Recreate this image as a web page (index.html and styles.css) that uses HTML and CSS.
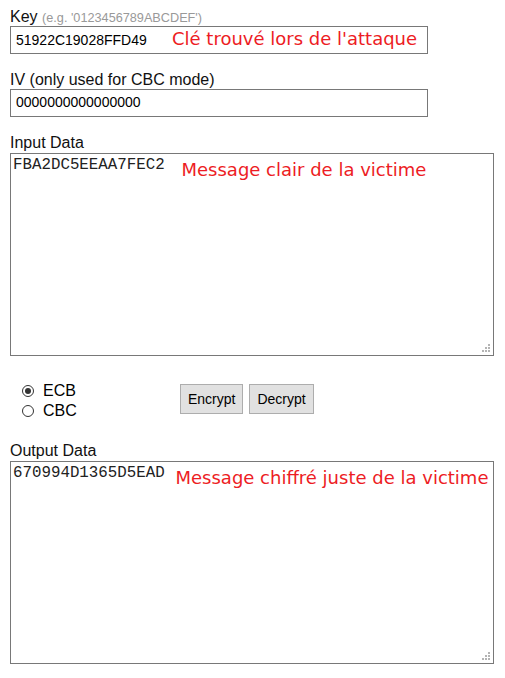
FILE: index.html
```html
<!DOCTYPE html>
<html lang="fr">
<head>
<meta charset="utf-8">
<title>AES</title>
<link rel="stylesheet" href="styles.css">
</head>
<body>
<form class="form">
  <div class="field field--key">
    <div class="label">Key <span class="hint">(e.g. '0123456789ABCDEF')</span></div>
    <div class="box box--line">
      <span class="value value--key">51922C19028FFD49</span>
      <span class="note">Clé trouvé lors de l'attaque</span>
    </div>
  </div>
  <div class="field field--iv">
    <div class="label">IV (only used for CBC mode)</div>
    <div class="box box--line">
      <span class="value">0000000000000000</span>
    </div>
  </div>
  <div class="field field--input">
    <div class="label label--area">Input Data</div>
    <div class="box box--area">
      <span class="mono mono--in">FBA2DC5EEAA7FEC2</span>
      <span class="note note--area">Message clair de la victime</span>
      <span class="grip"></span>
    </div>
  </div>
  <div class="controls">
    <div class="modes">
      <label class="mode"><input type="radio" name="mode" checked> ECB</label>
      <label class="mode"><input type="radio" name="mode"> CBC</label>
    </div>
    <div class="actions">
      <button type="button" class="btn">Encrypt</button>
      <button type="button" class="btn">Decrypt</button>
    </div>
  </div>
  <div class="field field--output">
    <div class="label label--area">Output Data</div>
    <div class="box box--area">
      <span class="mono mono--out">670994D1365D5EAD</span>
      <span class="note note--area">Message chiffré juste de la victime</span>
      <span class="grip"></span>
    </div>
  </div>
</form>
</body>
</html>
```
FILE: styles.css
```css
html, body {
  margin: 0;
  padding: 0;
  background: #fff;
}
body {
  font-family: "Liberation Sans", Arial, sans-serif;
  color: #111;
}
.form {
  padding: 8px 11px 0 10px;
}
.label {
  font-size: 16px;
  line-height: 18px;
  height: 18px;
}
.label--area {
  line-height: 20px;
  height: 20px;
}
.hint {
  font-size: 12.7px;
  color: #999;
}
.field--iv {
  margin-top: 17px;
}
.field--input {
  margin-top: 16px;
}
.field--output {
  margin-top: 20px;
}
.box {
  position: relative;
  box-sizing: border-box;
  border: 1px solid #787878;
  background: #fff;
  display: flex;
}
.box--line {
  width: 418px;
  height: 28px;
  padding: 3px 5px 0;
  align-items: baseline;
  line-height: 18px;
}
.box--area {
  width: 484px;
  height: 203px;
  padding: 2px 2px 0;
  align-items: flex-start;
}
.value {
  font-size: 14px;
  color: #000;
}
.value--key {
  width: 156px;
  flex: none;
}
.mono {
  font-family: "Liberation Mono", "Courier New", monospace;
  font-size: 15.8px;
  line-height: 18px;
  color: #222;
  flex: none;
}
.mono--in {
  width: 168.5px;
}
.mono--out {
  width: 162.5px;
}
.note {
  font-family: "DejaVu Sans", Verdana, sans-serif;
  font-size: 18px;
  color: #ed1c24;
  white-space: nowrap;
}
.note--area {
  line-height: 21px;
  margin-top: 3px;
}
.grip {
  position: absolute;
  right: 3px;
  bottom: 3px;
  width: 8px;
  height: 8px;
  background:
    linear-gradient(#b4b4b4, #b4b4b4) 6px 0 / 2px 2px no-repeat,
    linear-gradient(#b4b4b4, #b4b4b4) 3px 3px / 2px 2px no-repeat,
    linear-gradient(#b4b4b4, #b4b4b4) 6px 3px / 2px 2px no-repeat,
    linear-gradient(#b4b4b4, #b4b4b4) 0 6px / 2px 2px no-repeat,
    linear-gradient(#b4b4b4, #b4b4b4) 3px 6px / 2px 2px no-repeat,
    linear-gradient(#b4b4b4, #b4b4b4) 6px 6px / 2px 2px no-repeat;
}
.controls {
  margin-top: 25px;
  display: flex;
  align-items: flex-start;
}
.modes {
  width: 170px;
  box-sizing: border-box;
  padding-left: 12px;
  display: flex;
  flex-direction: column;
}
.mode {
  display: flex;
  align-items: center;
  height: 20px;
  font-size: 16px;
  color: #000;
}
.mode input {
  appearance: none;
  -webkit-appearance: none;
  margin: 0 9px 0 0;
  width: 12px;
  height: 12px;
  border: 1px solid #333;
  border-radius: 50%;
  box-sizing: border-box;
  display: grid;
  place-items: center;
  background: #fff;
}
.mode input:checked::after {
  content: "";
  width: 6px;
  height: 6px;
  border-radius: 50%;
  background: #333;
}
.actions {
  margin-top: 3px;
  display: flex;
  gap: 6px;
}
.btn {
  box-sizing: border-box;
  height: 30px;
  padding: 0 7px;
  font-family: "Liberation Sans", Arial, sans-serif;
  font-size: 14px;
  color: #000;
  background: #e1e1e1;
  border: 1px solid #adadad;
  border-radius: 0;
}
```
